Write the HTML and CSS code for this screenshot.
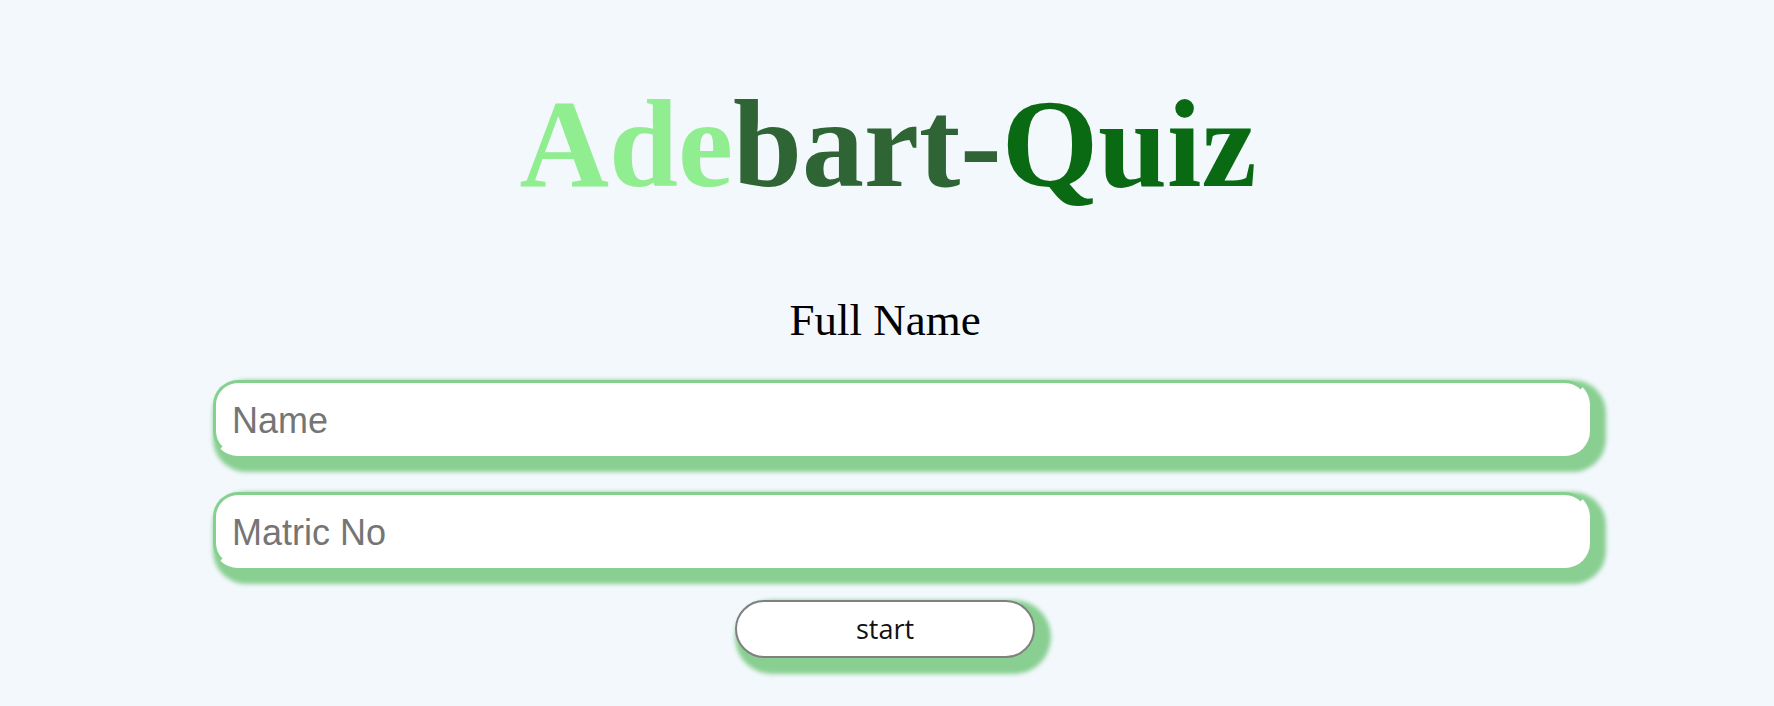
FILE: index.html
```html
<!DOCTYPE html>
<html lang="en">
<head>
<meta charset="utf-8">
<title>Adebart-Quiz</title>
<link rel="stylesheet" href="styles.css">
</head>
<body>
<main class="page">
  <h1 class="title"><span class="t-light">Ade</span><span class="t-mid">bart-</span><span class="t-dark">Quiz</span></h1>
  <form class="form">
    <label class="label" for="name">Full Name</label>
    <input class="field" id="name" type="text" placeholder="Name">
    <input class="field" id="matric" type="text" placeholder="Matric No">
    <button class="start" type="button">start</button>
  </form>
</main>
</body>
</html>
```

FILE: styles.css
```css
html, body {
  margin: 0;
  padding: 0;
  background: #f2f8fc;
}

.page {
  display: flex;
  flex-direction: column;
  align-items: center;
  padding-top: 83px;
  padding-bottom: 40px;
}

.title {
  margin: 0;
  font-family: "Liberation Serif", serif;
  font-weight: bold;
  font-size: 124px;
  line-height: 124px;
  padding-left: 2px;
}

.t-light { color: #90ee90; }
.t-mid { color: #2f6534; }
.t-dark { color: #0a6a14; }

.form {
  align-self: stretch;
  display: flex;
  flex-direction: column;
  align-items: center;
  margin-top: 91px;
}

.label {
  font-family: "Liberation Serif", serif;
  font-size: 45px;
  line-height: 44px;
  color: #000;
  padding-right: 4px;
}

.field {
  box-sizing: border-box;
  align-self: flex-start;
  margin-left: 213px;
  width: 1377px;
  height: 76px;
  margin-top: 36px;
  padding: 6px 16px 0;
  border: 3px solid #86d08f;
  border-right-color: #fff;
  border-bottom-color: #fff;
  border-radius: 25px;
  background: #fff;
  font-family: "Liberation Sans", Arial, sans-serif;
  font-size: 36px;
  color: #333;
  outline: none;
  box-shadow: 8px 8px 4px 8px #8acf92;
}

.field:first-of-type {
  margin-top: 38px;
}

.field::placeholder {
  color: #757575;
}

.start {
  box-sizing: border-box;
  margin-top: 32px;
  margin-right: 4px;
  width: 300px;
  height: 58px;
  border: 2px solid #808080;
  border-radius: 29px;
  background: #fff;
  font-family: "Open Sans", sans-serif;
  font-size: 27px;
  color: #111;
  padding: 0 0 2px;
  box-shadow: 8px 8px 4px 8px #8acf92;
  cursor: pointer;
}
```
